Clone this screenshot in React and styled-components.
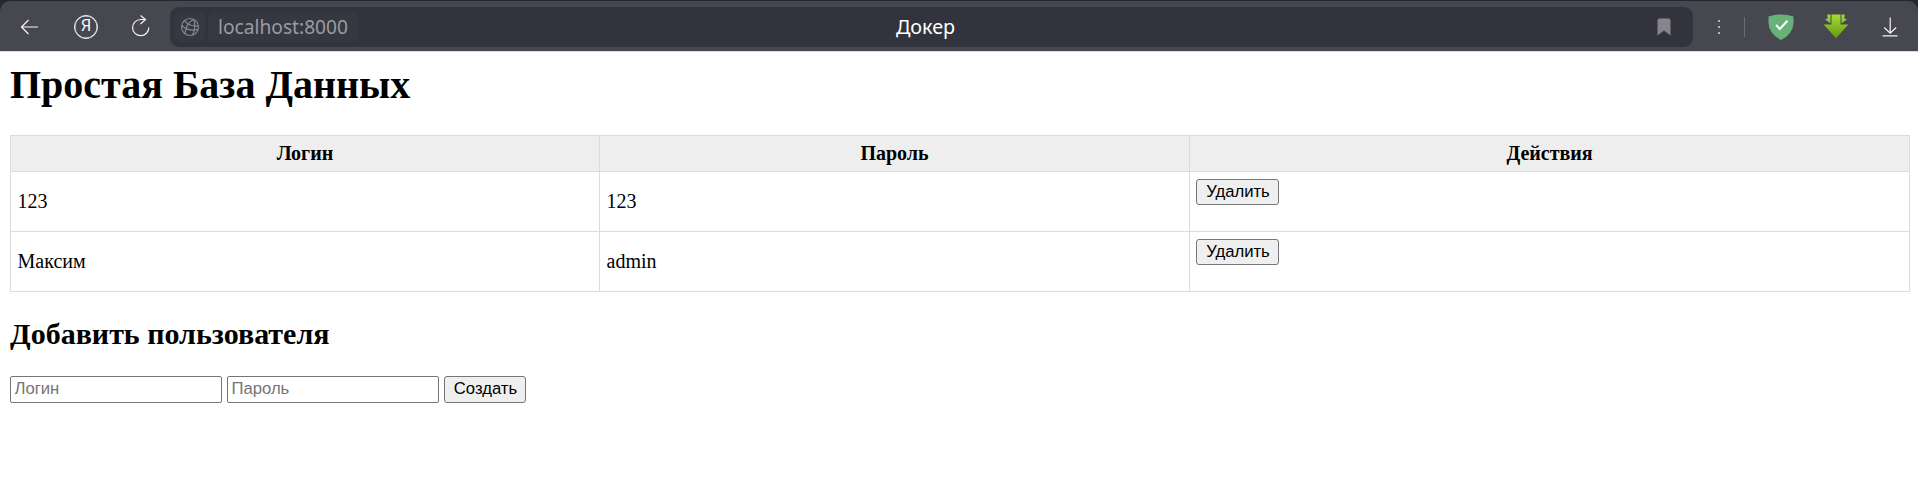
import React from "react";
import styled, { createGlobalStyle } from "styled-components";

const GlobalStyle = createGlobalStyle`
  body {
    margin: 0;
    background: #fff;
    color: #000;
    font-family: "Liberation Serif", "Times New Roman", serif;
    font-size: 20px;
  }
`;

const Window = styled.div`
  background: #262631;
  padding-top: 1px;
`;

const Toolbar = styled.header`
  box-sizing: border-box;
  height: 51px;
  display: flex;
  align-items: center;
  padding-top: 1px;
  background: #474750;
  border-bottom: 1px solid #dcdce0;
  border-radius: 10px 10px 0 0;
  font-family: "Noto Sans", "Open Sans", sans-serif;
  font-size: 19.2px;
`;

const NavGroup = styled.nav`
  display: flex;
  flex: none;
  width: 170px;
  padding-left: 2px;
  box-sizing: border-box;
`;

const IconButton = styled.span`
  display: flex;
  flex: none;
  align-items: center;
  justify-content: center;
  width: ${(p) => p.$width}px;
  height: 40px;
  color: #f4f4f4;
`;

const YandexMark = styled.span`
  box-sizing: border-box;
  display: flex;
  align-items: center;
  justify-content: center;
  width: 24px;
  height: 24px;
  border: 1px solid #f4f4f4;
  border-radius: 50%;
  box-shadow: inset 0 0 0 0.4px #f4f4f4;
  font: 400 16.5px/1 "Roboto", sans-serif;
`;

const AddressBar = styled.div`
  box-sizing: border-box;
  flex: none;
  display: grid;
  grid-template-columns: 1fr auto 1fr;
  align-items: center;
  width: 1523px;
  height: 40px;
  padding: 0 4px 0 5px;
  background: #33333d;
  border-radius: 9px;
`;

const AddressStart = styled.div`
  display: flex;
  align-items: center;
  gap: 3px;
`;

const Chip = styled.span`
  box-sizing: border-box;
  display: flex;
  align-items: center;
  justify-content: center;
  width: ${(p) => p.$width}px;
  height: 30px;
  border-radius: 7px;
  background: #353841;
  color: #9b9ba0;
`;

const PageName = styled.span`
  margin-right: 13px;
  color: #fff;
  font-size: 19.8px;
`;

const AddressEnd = styled.div`
  display: flex;
  justify-content: flex-end;
  padding-right: 18px;
`;

const Tools = styled.div`
  display: flex;
  align-items: center;
`;

const Divider = styled.span`
  width: 1px;
  height: 20px;
  background: #6b6b72;
`;

const Page = styled.main`
  padding: 8px 8px 0 10px;
`;

const Title = styled.h1`
  margin: 0 0 25px;
  font-size: 40px;
  line-height: 50px;
`;

const Subtitle = styled.h2`
  margin: 24px 0;
  font-size: 30px;
  line-height: 36px;
`;

const UserTable = styled.table`
  width: 1899px;
  table-layout: fixed;
  border-collapse: collapse;
`;

const HeadCell = styled.th`
  box-sizing: border-box;
  height: 36px;
  padding: 0;
  width: ${(p) => p.$width}px;
  border: 1px solid #dcdcdc;
  background: #eee;
`;

const Cell = styled.td`
  box-sizing: border-box;
  height: 60px;
  padding: ${(p) => (p.$action ? "7px 6px" : "0 6.5px")};
  border: 1px solid #dcdcdc;
  vertical-align: ${(p) => (p.$action ? "top" : "middle")};
`;

const Button = styled.button`
  box-sizing: border-box;
  display: block;
  width: ${(p) => p.$width}px;
  height: ${(p) => p.$height}px;
  padding: 0 0 1px 1px;
  border: 1px solid #767676;
  border-radius: 3px;
  background: #efefef;
  color: #000;
  font: 16.67px/20px "Liberation Sans", Arial, sans-serif;
`;

const Form = styled.form`
  display: flex;
`;

const Field = styled.input`
  box-sizing: border-box;
  width: 212px;
  height: 27px;
  margin: 0 5px 0 0;
  padding: 0 4px 1px 3.5px;
  border: 1px solid #767676;
  border-radius: 2px;
  font: 16.67px/20px "Liberation Sans", Arial, sans-serif;
  &::placeholder {
    color: #757575;
  }
`;

const Svg = ({ w = 24, h = 24, children, ...rest }) => (
  <svg width={w} height={h} viewBox={`0 0 ${w} ${h}`} fill="none" stroke="currentColor" strokeWidth="1.2" {...rest}>
    {children}
  </svg>
);

const users = [
  { login: "123", password: "123" },
  { login: "Максим", password: "admin" },
];

export default function App() {
  return (
    <>
      <GlobalStyle />
      <Window>
        <Toolbar>
          <NavGroup>
            <IconButton $width={56}>
              <Svg><path d="M20 12H3.5M10.5 5L3.5 12L10.5 19" /></Svg>
            </IconButton>
            <IconButton $width={56}>
              <YandexMark>Я</YandexMark>
            </IconButton>
            <IconButton $width={56}>
              <Svg><path d="M18.8 12.5A8.1 8.1 0 1 1 10.7 4.5H15.5M10.5 .5L15.5 4.5L10.5 9" /></Svg>
            </IconButton>
          </NavGroup>
          <AddressBar>
            <AddressStart>
              <Chip $width={30}>
                <Svg w={20} h={20} stroke="#85858c">
                  <circle cx="10" cy="10" r="8.5" />
                  <path d="M13.5 2.2C8.5 5 5.5 10 5 16.8M13.5 2.2C15.5 7 15 12.5 12.5 18.1M1.6 8.5C6.5 12.8 12 14 18 12.3M4.5 3.6C7.5 7.5 12.5 9.5 18.4 9" />
                </Svg>
              </Chip>
              <Chip $width={150}>localhost:8000</Chip>
            </AddressStart>
            <PageName>Докер</PageName>
            <AddressEnd>
              <Svg w={14} h={18} stroke="none">
                <path fill="#85858b" d="M.5 2.5Q.5 .5 2.5 .5H11.5Q13.5 .5 13.5 2.5V17.5L7 12.5L.5 17.5Z" />
              </Svg>
            </AddressEnd>
          </AddressBar>
          <Tools>
            <IconButton $width={51}>
              <Svg w={4} h={16} stroke="none">
                <path fill="#b3b3b7" d="M1 1h2v2H1zM1 7h2v2H1zM1 13h2v2H1z" />
              </Svg>
            </IconButton>
            <Divider />
            <IconButton $width={71}>
              <Svg w={26} h={26} stroke="none">
                <path fill="#68b27a" d="M.5 2.5Q13-1.5 25.5 2.5V9Q25 20 13 26Q1 20 .5 9Z" />
                <path stroke="#fff" strokeWidth="2" d="M8 10.8L11.8 15L19.5 6.8" />
              </Svg>
            </IconButton>
            <IconButton $width={39}>
              <Svg w={26} h={26} stroke="none">
                <defs>
                  <linearGradient id="green" gradientUnits="userSpaceOnUse" x1="0" y1="0" x2="0" y2="25">
                    <stop stopColor="#a8dc35" />
                    <stop offset="1" stopColor="#5f9810" />
                  </linearGradient>
                </defs>
                <path fill="url(#green)" d="M4.5 .5H7.5V9.5L1.8 5H4.5ZM21.5 .5H18.5V9.5L24.2 5H21.5Z" />
                <path fill="url(#green)" d="M8.5 .5H17.5V10.5H25.3L13 24.2L.7 10.5H8.5Z" />
              </Svg>
            </IconButton>
            <IconButton $width={70}>
              <Svg><path d="M12.2 2.5V18M6.2 12.5L12.2 18.2L18.2 12.5M4.5 20.8H19.5" /></Svg>
            </IconButton>
          </Tools>
        </Toolbar>
      </Window>
      <Page>
        <Title>Простая База Данных</Title>
        <UserTable>
          <thead>
            <tr>
              <HeadCell $width={589}>Логин</HeadCell>
              <HeadCell $width={590}>Пароль</HeadCell>
              <HeadCell $width={720}>Действия</HeadCell>
            </tr>
          </thead>
          <tbody>
            {users.map((user) => (
              <tr key={user.login}>
                <Cell>{user.login}</Cell>
                <Cell>{user.password}</Cell>
                <Cell $action>
                  <Button type="button" $width={83} $height={26}>Удалить</Button>
                </Cell>
              </tr>
            ))}
          </tbody>
        </UserTable>
        <Subtitle>Добавить пользователя</Subtitle>
        <Form>
          <Field placeholder="Логин" />
          <Field placeholder="Пароль" />
          <Button type="button" $width={82} $height={27}>Создать</Button>
        </Form>
      </Page>
    </>
  );
}
